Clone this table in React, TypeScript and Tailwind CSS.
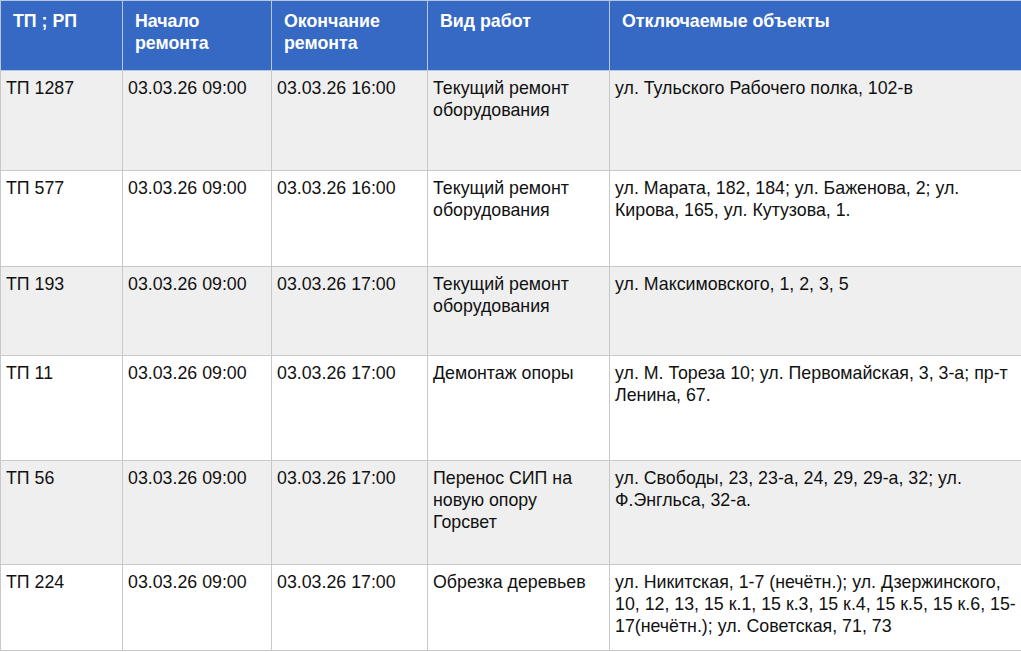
import React from 'react';

type Row = {
  tp: string;
  start: string;
  end: string;
  work: string;
  objects: string;
  h: string;
  bg: string;
};

const rows: Row[] = [
  {
    tp: 'ТП 1287',
    start: '03.03.26 09:00',
    end: '03.03.26 16:00',
    work: 'Текущий ремонт оборудования',
    objects: 'ул. Тульского Рабочего полка, 102-в',
    h: 'h-[100px]',
    bg: 'bg-[#efefef]',
  },
  {
    tp: 'ТП 577',
    start: '03.03.26 09:00',
    end: '03.03.26 16:00',
    work: 'Текущий ремонт оборудования',
    objects: 'ул. Марата, 182, 184; ул. Баженова, 2; ул. Кирова, 165, ул. Кутузова, 1.',
    h: 'h-[96px]',
    bg: 'bg-white',
  },
  {
    tp: 'ТП 193',
    start: '03.03.26 09:00',
    end: '03.03.26 17:00',
    work: 'Текущий ремонт оборудования',
    objects: 'ул. Максимовского, 1, 2, 3, 5',
    h: 'h-[89px]',
    bg: 'bg-[#efefef]',
  },
  {
    tp: 'ТП 11',
    start: '03.03.26 09:00',
    end: '03.03.26 17:00',
    work: 'Демонтаж опоры',
    objects: 'ул. М. Тореза 10; ул. Первомайская, 3, 3-а; пр-т Ленина, 67.',
    h: 'h-[105px]',
    bg: 'bg-white',
  },
  {
    tp: 'ТП 56',
    start: '03.03.26 09:00',
    end: '03.03.26 17:00',
    work: 'Перенос СИП на новую опору Горсвет',
    objects: 'ул. Свободы, 23, 23-а, 24, 29, 29-а, 32; ул. Ф.Энгльса, 32-а.',
    h: 'h-[104px]',
    bg: 'bg-[#efefef]',
  },
  {
    tp: 'ТП 224',
    start: '03.03.26 09:00',
    end: '03.03.26 17:00',
    work: 'Обрезка деревьев',
    objects:
      'ул. Никитская, 1-7 (нечётн.); ул. Дзержинского, 10, 12, 13, 15 к.1, 15 к.3, 15 к.4, 15 к.5, 15 к.6, 15-17(нечётн.); ул. Советская, 71, 73',
    h: 'h-[86px]',
    bg: 'bg-white',
  },
];

const headers = ['ТП ; РП', 'Начало ремонта', 'Окончание ремонта', 'Вид работ', 'Отключаемые объекты'];

const cell = 'border border-[#c8c8c8] pl-[5px] pr-[6px] pt-[6px] align-top';

export default function App() {
  return (
    <div className="h-[652px] w-[1021px] overflow-hidden bg-white font-['Liberation_Sans',Arial,sans-serif] text-[17.8px] leading-[22px] text-[#111]">
      <table className="w-[1022px] table-fixed border-collapse">
        <colgroup>
          <col className="w-[122px]" />
          <col className="w-[149px]" />
          <col className="w-[156px]" />
          <col className="w-[182px]" />
          <col className="w-[413px]" />
        </colgroup>
        <thead>
          {/* Шапка */}
          <tr className="h-[70px] bg-[#3569c4]">
            {headers.map((t) => (
              <th
                key={t}
                className="border border-[#b9c6e2] pl-3 pr-2 pt-[9px] pb-0 text-left align-top font-bold text-white"
              >
                {t}
              </th>
            ))}
          </tr>
        </thead>
        <tbody>
          {rows.map((r) => (
            <tr key={r.tp} className={`${r.h} ${r.bg}`}>
              <td className={cell}>{r.tp}</td>
              <td className={cell}>{r.start}</td>
              <td className={cell}>{r.end}</td>
              <td className={`${cell} pr-[12px]`}>{r.work}</td>
              <td className={cell}>{r.objects}</td>
            </tr>
          ))}
        </tbody>
      </table>
    </div>
  );
}
